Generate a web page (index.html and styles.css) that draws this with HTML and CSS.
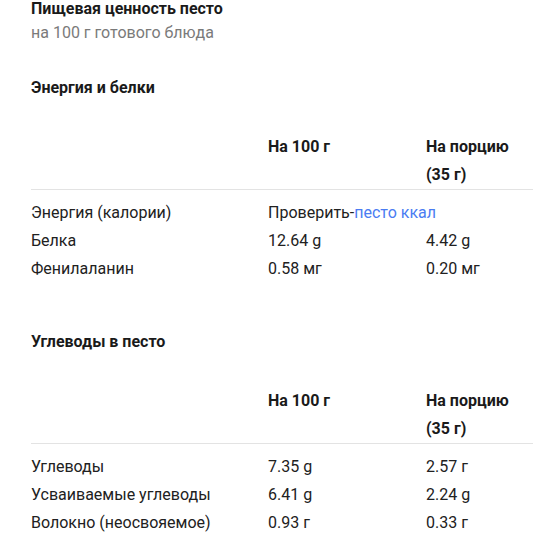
FILE: index.html
```html
<!DOCTYPE html>
<html lang="ru">
<head>
<meta charset="utf-8">
<link rel="stylesheet" href="styles.css">
</head>
<body>
<div class="page">
  <h1 class="title">Пищевая ценность песто</h1>
  <p class="subtitle">на 100 г готового блюда</p>

  <section class="section">
    <h2 class="section-title">Энергия и белки</h2>
    <div class="table">
      <div class="thead">
        <div class="cell"></div>
        <div class="cell th">На 100 г</div>
        <div class="cell th">На порцию<br>(35 г)</div>
      </div>
      <div class="tbody">
        <div class="cell">Энергия (калории)</div>
        <div class="cell span2">Проверить-<a class="link" href="#">песто ккал</a></div>
        <div class="cell">Белка</div>
        <div class="cell">12.64 g</div>
        <div class="cell">4.42 g</div>
        <div class="cell">Фенилаланин</div>
        <div class="cell">0.58 мг</div>
        <div class="cell">0.20 мг</div>
      </div>
    </div>
  </section>

  <section class="section second">
    <h2 class="section-title">Углеводы в песто</h2>
    <div class="table">
      <div class="thead">
        <div class="cell"></div>
        <div class="cell th">На 100 г</div>
        <div class="cell th">На порцию<br>(35 г)</div>
      </div>
      <div class="tbody">
        <div class="cell">Углеводы</div>
        <div class="cell">7.35 g</div>
        <div class="cell">2.57 г</div>
        <div class="cell">Усваиваемые углеводы</div>
        <div class="cell">6.41 g</div>
        <div class="cell">2.24 g</div>
        <div class="cell">Волокно (неосвояемое)</div>
        <div class="cell">0.93 г</div>
        <div class="cell">0.33 г</div>
      </div>
    </div>
  </section>
</div>
</body>
</html>
```

FILE: styles.css
```css
html, body {
  margin: 0;
  padding: 0;
  background: #ffffff;
}
body {
  font-family: Roboto, "Noto Sans", Arial, sans-serif;
  font-size: 16px;
  color: #212121;
}
.page {
  padding-left: 31px;
}
.title {
  margin: 0;
  font-size: 16px;
  font-weight: 700;
  line-height: 18px;
  color: #1a1a1a;
}
.subtitle {
  margin: 5px 0 0;
  font-size: 16px;
  line-height: 20px;
  color: #7a7a7a;
}
.section {
  margin-top: 35px;
}
.section.second {
  margin-top: 49px;
}
.section-title {
  margin: 0;
  font-size: 16px;
  font-weight: 700;
  line-height: 20px;
  color: #1a1a1a;
}
.table {
  margin-top: 35px;
}
.thead, .tbody {
  display: grid;
  grid-template-columns: 237px 158px 1fr;
}
.thead {
  border-bottom: 1px solid #e3e3e3;
}
.tbody {
  padding-top: 9px;
}
.cell {
  line-height: 28px;
  white-space: nowrap;
}
.th {
  font-weight: 700;
  color: #1a1a1a;
}
.span2 {
  grid-column: span 2;
}
.link {
  color: #4a7cf2;
  text-decoration: none;
}
```
